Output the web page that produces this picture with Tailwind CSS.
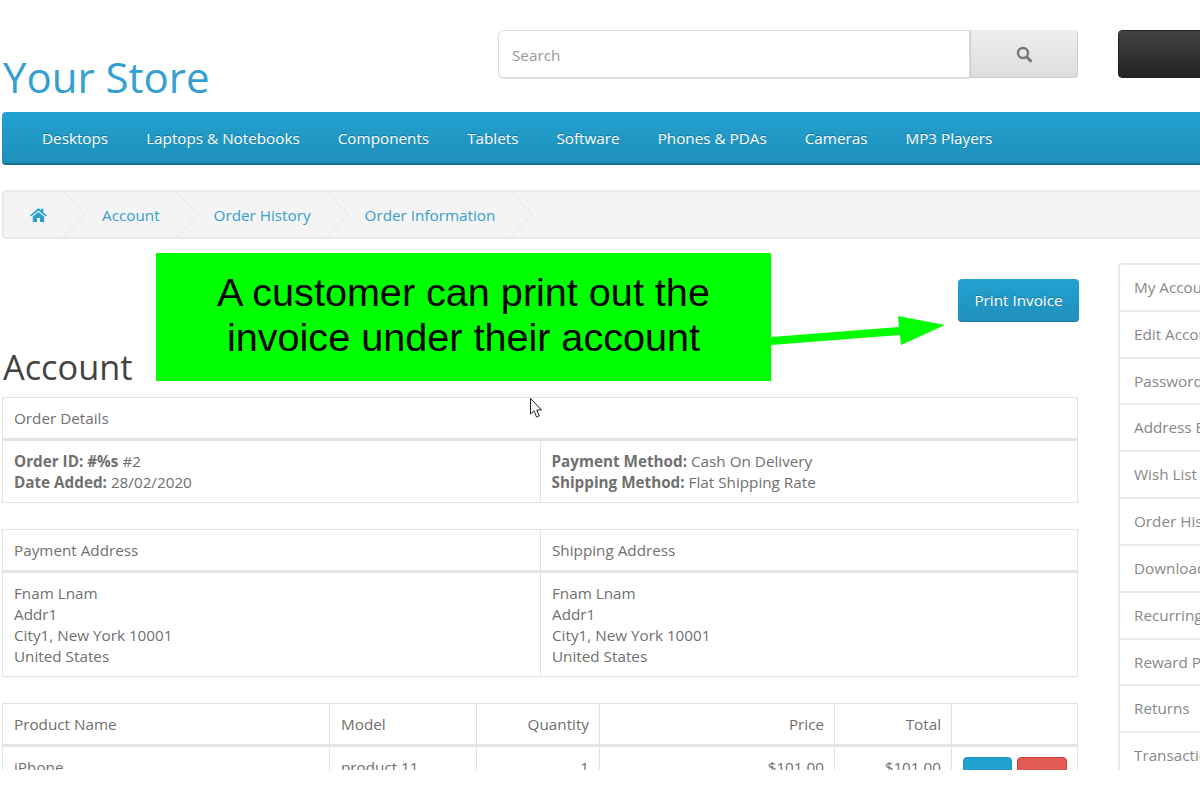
<!DOCTYPE html>
<html lang="en">

<head>
    <meta charset="UTF-8">
    <title>Order Information</title>
    <script src="https://cdn.jsdelivr.net/npm/@tailwindcss/browser@4"></script>
</head>

<body class="bg-white overflow-hidden font-['Open_Sans',sans-serif] text-[15.25px] leading-[21px] text-[#707070]">
    <div class="relative h-[770px] w-[1200px] overflow-hidden">
        <div class="w-[1500px] pl-[2px]">
            <!-- header -->
            <header class="flex pt-[30px]">
                <div class="w-[496px] pt-[18px] pl-px">
                    <a href="#" class="block text-[42px] leading-[58px] text-[#35a0d0]">Your Store</a>
                </div>
                <div class="flex h-[49px] w-[580px]">
                    <input type="text" placeholder="Search"
                        class="h-[49px] flex-1 rounded-l-[6px] border border-[#ddd] border-b-2 bg-white px-[13px] pt-px text-[15.25px] placeholder-[#999] outline-none">
                    <button class="flex h-[48px] w-[108px] items-center justify-center rounded-r-[4px] border border-[#ccc] border-t-[#e8e8e8] bg-gradient-to-b from-[#eee] to-[#ddd] pt-px">
                        <svg width="17" height="17" viewBox="0 0 17 17" fill="none" stroke="#777" stroke-width="2.4">
                            <circle cx="7" cy="7" r="5" />
                            <path d="M10.8 11 L15.5 15.7" stroke-width="3" />
                        </svg>
                    </button>
                </div>
                <div class="ml-[40px] h-[48px] w-[300px] rounded-[4px] border border-[#222] bg-gradient-to-b from-[#444] to-[#222]"></div>
            </header>

            <!-- nav -->
            <nav class="mt-[6px] flex h-[53px] items-center gap-[38px] rounded-[4px] border-b-2 border-[#14708f] bg-gradient-to-b from-[#23a1d1] to-[#1f90bb] pl-[40px] pt-[2px] text-[#fff] [text-shadow:0_-1px_0_rgba(0,0,0,.25)]">
                <a href="#">Desktops</a>
                <a href="#">Laptops &amp; Notebooks</a>
                <a href="#">Components</a>
                <a href="#">Tablets</a>
                <a href="#">Software</a>
                <a href="#">Phones &amp; PDAs</a>
                <a href="#">Cameras</a>
                <a href="#">MP3 Players</a>
            </nav>

            <!-- breadcrumb -->
            <ul class="mt-[25px] flex h-[49px] items-center rounded-[4px] border-2 border-[#e9e9e9] bg-[#f4f4f4] text-[#35a0d0]">
                <li class="relative flex h-full w-[58px] items-center pl-[26px]">
                    <svg width="17" height="14" viewBox="0 0 17 14" fill="#2a9fd0">
                        <path d="M8.5 0 L11 2.2 V0.8 H13.2 V4.2 L17 7.4 L15.9 8.6 L8.5 2.4 L1.1 8.6 L0 7.4 Z" />
                        <path d="M2.8 8.6 L8.5 3.9 L14.2 8.6 V14 H10 V10 H7 V14 H2.8 Z" />
                    </svg>
                    <svg class="absolute left-full top-[-2px]" width="26" height="49" fill="none" stroke="#e4e4e4"><path d="M0 0 L23 24.5 L0 49" /></svg>
                </li>
                <li class="relative flex h-full items-center pl-[40px] pr-[15px] pt-[2px]">
                    <a href="#">Account</a>
                    <svg class="absolute left-full top-[-2px]" width="26" height="49" fill="none" stroke="#e4e4e4"><path d="M0 0 L23 24.5 L0 49" /></svg>
                </li>
                <li class="relative flex h-full items-center pl-[39px] pr-[14px] pt-[2px]">
                    <a href="#">Order History</a>
                    <svg class="absolute left-full top-[-2px]" width="26" height="49" fill="none" stroke="#e4e4e4"><path d="M0 0 L23 24.5 L0 49" /></svg>
                </li>
                <li class="relative flex h-full items-center pl-[40px] pr-[14px] pt-[2px]">
                    <a href="#">Order Information</a>
                    <svg class="absolute left-full top-[-2px]" width="26" height="49" fill="none" stroke="#e4e4e4"><path d="M0 0 L23 24.5 L0 49" /></svg>
                </li>
            </ul>

            <div class="flex gap-[40px]">
                <main class="w-[1076px] shrink-0 pt-[40px]">
                    <div class="flex h-[43px] justify-end">
                        <a href="#" class="-mr-px flex h-[43px] w-[121px] items-center justify-center rounded-[4px] border-b border-[#1a7a9f] bg-gradient-to-b from-[#23a1d1] to-[#1f90bb] pt-px text-white [text-shadow:0_-1px_0_rgba(0,0,0,.25)]">Print Invoice</a>
                    </div>
                    <h1 class="mt-[25px] pl-px text-[34.3px] leading-[40px] text-[#444]">Account</h1>

                    <table class="mt-[10px] w-full table-fixed border-collapse">
                        <thead>
                            <tr>
                                <td colspan="2" class="h-[42px] border border-b-[3px] border-[#e3e3e3] px-[11px]">Order Details</td>
                            </tr>
                        </thead>
                        <tbody>
                            <tr>
                                <td class="w-[538px] border border-[#e3e3e3] px-[11px] pb-[9px] pt-[10px]"><b>Order ID: #%s</b> #2<br><b>Date Added:</b> 28/02/2020</td>
                                <td class="border border-[#e3e3e3] px-[11px] pb-[9px] pt-[10px]"><b>Payment Method:</b> Cash On Delivery<br><b>Shipping Method:</b> Flat Shipping Rate</td>
                            </tr>
                        </tbody>
                    </table>

                    <table class="mt-[26px] w-full table-fixed border-collapse">
                        <thead>
                            <tr>
                                <td class="h-[42px] w-[538px] border border-b-[3px] border-[#e3e3e3] px-[11px]">Payment Address</td>
                                <td class="h-[42px] border border-b-[3px] border-[#e3e3e3] px-[11px]">Shipping Address</td>
                            </tr>
                        </thead>
                        <tbody>
                            <tr>
                                <td class="border border-[#e3e3e3] px-[11px] pb-[9px] pt-[10px]">Fnam Lnam<br>Addr1<br>City1, New York 10001<br>United States</td>
                                <td class="border border-[#e3e3e3] px-[11px] pb-[9px] pt-[10px]">Fnam Lnam<br>Addr1<br>City1, New York 10001<br>United States</td>
                            </tr>
                        </tbody>
                    </table>

                    <table class="mt-[26px] w-full table-fixed border-collapse">
                        <thead>
                            <tr>
                                <td class="h-[42px] w-[327px] border border-b-[3px] border-[#e3e3e3] px-[11px]">Product Name</td>
                                <td class="w-[147px] border border-b-[3px] border-[#e3e3e3] px-[11px]">Model</td>
                                <td class="w-[123px] border border-b-[3px] border-[#e3e3e3] px-[10px] text-right">Quantity</td>
                                <td class="w-[235px] border border-b-[3px] border-[#e3e3e3] px-[10px] text-right">Price</td>
                                <td class="w-[117px] border border-b-[3px] border-[#e3e3e3] px-[10px] text-right">Total</td>
                                <td class="border border-b-[3px] border-[#e3e3e3]"></td>
                            </tr>
                        </thead>
                        <tbody>
                            <tr>
                                <td class="border border-[#e3e3e3] px-[11px] py-[10px] align-top">iPhone</td>
                                <td class="border border-[#e3e3e3] px-[11px] py-[10px] align-top">product 11</td>
                                <td class="border border-[#e3e3e3] px-[10px] py-[10px] text-right align-top">1</td>
                                <td class="border border-[#e3e3e3] px-[10px] py-[10px] text-right align-top">$101.00</td>
                                <td class="border border-[#e3e3e3] px-[10px] py-[10px] text-right align-top">$101.00</td>
                                <td class="border border-[#e3e3e3] py-[10px] pl-[11px] align-top">
                                    <div class="flex gap-[5px]">
                                        <a href="#" class="block h-[40px] w-[49px] rounded-[4px] border border-[#1f90bb] bg-[#23a1d1]"></a>
                                        <a href="#" class="block h-[40px] w-[50px] rounded-[4px] border border-[#c9403b] bg-[#e25a56]"></a>
                                    </div>
                                </td>
                            </tr>
                        </tbody>
                    </table>
                </main>

                <!-- sidebar -->
                <aside class="mt-[24px] w-[300px] rounded-[4px] border-2 border-[#e9e9e9] text-[#888]">
                    <a href="#" class="block h-[47px] border-b-2 border-[#e9e9e9] px-[14px] py-[12px]">My Account</a>
                    <a href="#" class="block h-[47px] border-b-2 border-[#e9e9e9] px-[14px] py-[12px]">Edit Account</a>
                    <a href="#" class="block h-[46px] border-b-2 border-[#e9e9e9] px-[14px] py-[12px]">Password</a>
                    <a href="#" class="block h-[47px] border-b-2 border-[#e9e9e9] px-[14px] py-[12px]">Address Book</a>
                    <a href="#" class="block h-[47px] border-b-2 border-[#e9e9e9] px-[14px] py-[12px]">Wish List</a>
                    <a href="#" class="block h-[47px] border-b-2 border-[#e9e9e9] px-[14px] py-[12px]">Order History</a>
                    <a href="#" class="block h-[47px] border-b-2 border-[#e9e9e9] px-[14px] py-[12px]">Downloads</a>
                    <a href="#" class="block h-[47px] border-b-2 border-[#e9e9e9] px-[14px] py-[12px]">Recurring payments</a>
                    <a href="#" class="block h-[46px] border-b-2 border-[#e9e9e9] px-[14px] py-[12px]">Reward Points</a>
                    <a href="#" class="block h-[47px] border-b-2 border-[#e9e9e9] px-[14px] py-[12px]">Returns</a>
                    <a href="#" class="block h-[47px] border-b-2 border-[#e9e9e9] px-[14px] py-[12px]">Transactions</a>
                </aside>
            </div>
        </div>

        <!-- annotation over the page -->
        <div class="absolute left-[156px] top-[253px] flex h-[128px] w-[615px] items-center justify-center bg-[#00ff00] pb-[5px] text-center font-['Liberation_Sans',sans-serif] text-[39.6px] leading-[45px] text-black">
            A customer can print out the<br>invoice under their account
        </div>
        <svg class="absolute left-[771px] top-[310px]" width="180" height="40" fill="#00ff00">
            <path d="M0 27 L128 17 L127 6 L174 15 L130 35 L129 25 L0 35 Z" />
        </svg>
        <svg class="absolute left-[530px] top-[398px]" width="14" height="21" viewBox="0 0 14 21" fill="#fff" stroke="#222">
            <path d="M0.5 0.5 V16 L4 12.8 L6.5 19 L9.3 17.8 L6.8 12 H11.5 Z" />
        </svg>
    </div>
</body>

</html>
